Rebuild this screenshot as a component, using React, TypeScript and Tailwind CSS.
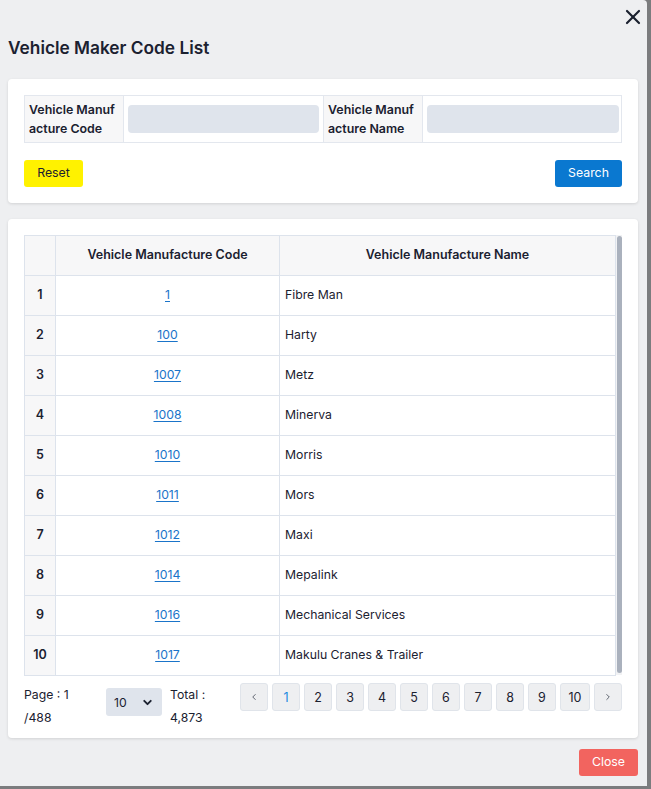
import { ChevronDown, ChevronLeft, ChevronRight, X } from "lucide-react";

const rows = [
  { code: "1", name: "Fibre Man" },
  { code: "100", name: "Harty" },
  { code: "1007", name: "Metz" },
  { code: "1008", name: "Minerva" },
  { code: "1010", name: "Morris" },
  { code: "1011", name: "Mors" },
  { code: "1012", name: "Maxi" },
  { code: "1014", name: "Mepalink" },
  { code: "1016", name: "Mechanical Services" },
  { code: "1017", name: "Makulu Cranes & Trailer" },
];

const pages = ["1", "2", "3", "4", "5", "6", "7", "8", "9", "10"];

export default function App() {
  return (
    <div className="w-[651px] h-[789px] bg-[#7b7c7e] overflow-hidden font-['Inter',sans-serif] text-[#1b2130]">
      <div className="w-[647px] h-[786px] bg-[#eeeff1] rounded-tr-[4px] flex flex-col">
        {/* Header */}
        <div className="flex justify-end pt-[5px] pr-[2px] h-[30px]">
          <X className="w-[24px] h-[24px] text-[#1b2130]" strokeWidth={2.2} />
        </div>
        <h1 className="pl-[8px] mt-[7px] text-[17.3px] leading-[22px] font-semibold">
          Vehicle Maker Code List
        </h1>

        {/* Search panel */}
        <div className="mx-[8px] mt-[20px] bg-white rounded-[4px] shadow-[0_1px_3px_rgba(0,0,0,0.12)] px-[16px] pt-[16px] pb-[16px] w-[630px]">
          <div className="grid grid-cols-[99px_200px_99px_200px] border border-[#e3e7ee] h-[48px]">
            <div className="bg-[#f7f7f8] border-r border-[#e3e7ee] px-[4px] flex flex-col justify-center text-[12.4px] leading-[19px] font-semibold whitespace-nowrap">
              <span>Vehicle Manuf</span>
              <span>acture Code</span>
            </div>
            <div className="border-r border-[#e3e7ee] px-[4px] flex items-center">
              <div className="w-full h-[28px] rounded-[4px] bg-[#dfe4ec]" />
            </div>
            <div className="bg-[#f7f7f8] border-r border-[#e3e7ee] px-[4px] flex flex-col justify-center text-[12.4px] leading-[19px] font-semibold whitespace-nowrap">
              <span>Vehicle Manuf</span>
              <span>acture Name</span>
            </div>
            <div className="px-[4px] flex items-center">
              <div className="w-full h-[28px] rounded-[4px] bg-[#dfe4ec]" />
            </div>
          </div>
          <div className="flex justify-between mt-[17px]">
            <button className="h-[27px] w-[59px] rounded-[3px] bg-[#fff200] text-[12.3px] text-[#1b2130]">
              Reset
            </button>
            <button className="h-[27px] w-[67px] rounded-[3px] bg-[#0a78d0] text-[12.3px] text-white">
              Search
            </button>
          </div>
        </div>

        {/* Result panel */}
        <div className="mx-[8px] mt-[16px] bg-white rounded-[4px] shadow-[0_1px_3px_rgba(0,0,0,0.12)] px-[16px] pt-[16px] w-[630px] h-[519px]">
          <div className="flex">
            <table className="w-[592px] border-collapse text-[12.25px]">
              <thead>
                <tr className="h-[40px] bg-[#f7f7f8]">
                  <th className="w-[31px] border border-[#dde3ec]" />
                  <th className="w-[224px] border border-[#dde3ec] font-semibold text-[12.5px]">
                    Vehicle Manufacture Code
                  </th>
                  <th className="border border-[#dde3ec] font-semibold text-[12.5px]">
                    Vehicle Manufacture Name
                  </th>
                </tr>
              </thead>
              <tbody>
                {rows.map((row, i) => (
                  <tr key={row.code} className="h-[40px]">
                    <td className="bg-[#f7f7f8] border border-[#dde3ec] text-center font-semibold text-[12.5px]">
                      {i + 1}
                    </td>
                    <td className="border border-[#dde3ec] text-center">
                      <a className="text-[#1a74c9] underline underline-offset-2">{row.code}</a>
                    </td>
                    <td className="border border-[#dde3ec] px-[5px]">{row.name}</td>
                  </tr>
                ))}
              </tbody>
            </table>
            <div className="w-[6px] h-[440px] bg-[#f1f2f4] flex justify-center">
              <div className="w-[5px] h-[437px] mt-[1px] rounded-[3px] bg-[#aab1bd]" />
            </div>
          </div>

          {/* Pagination */}
          <div className="flex items-start mt-[7px] text-[12.25px] leading-[23px]">
            <div className="w-[82px]">
              <div>Page : 1</div>
              <div>/488</div>
            </div>
            <div className="mt-[5px] w-[56px] h-[28px] rounded-[3px] bg-[#dfe4ec] flex items-center justify-between px-[8px]">
              <span>10</span>
              <ChevronDown className="w-[13px] h-[13px]" strokeWidth={3.5} />
            </div>
            <div className="ml-[8px] w-[70px]">
              <div>Total :</div>
              <div>4,873</div>
            </div>
            <div className="flex gap-[4px] text-[12.5px]">
              <div className="w-[28px] h-[28px] rounded-[3px] bg-[#eeeff1] border border-[#e0e4ea] flex items-center justify-center text-[#444b57]">
                <ChevronLeft className="w-[10px] h-[10px]" strokeWidth={2} />
              </div>
              {pages.map((p) => (
                <div
                  key={p}
                  className={`${p === "10" ? "w-[30px]" : "w-[28px]"} h-[28px] rounded-[3px] bg-[#eeeff1] border border-[#e0e4ea] flex items-center justify-center ${p === "1" ? "text-[#1a8ae0]" : "text-[#1b2130]"}`}
                >
                  {p}
                </div>
              ))}
              <div className="w-[28px] h-[28px] rounded-[3px] bg-[#eeeff1] border border-[#e0e4ea] flex items-center justify-center text-[#444b57]">
                <ChevronRight className="w-[10px] h-[10px]" strokeWidth={2} />
              </div>
            </div>
          </div>
        </div>

        {/* Footer */}
        <div className="flex justify-end pr-[9px] mt-[11px]">
          <button className="h-[27px] w-[59px] rounded-[3px] bg-[#f2645f] text-[12.3px] text-white">
            Close
          </button>
        </div>
      </div>
    </div>
  );
}
